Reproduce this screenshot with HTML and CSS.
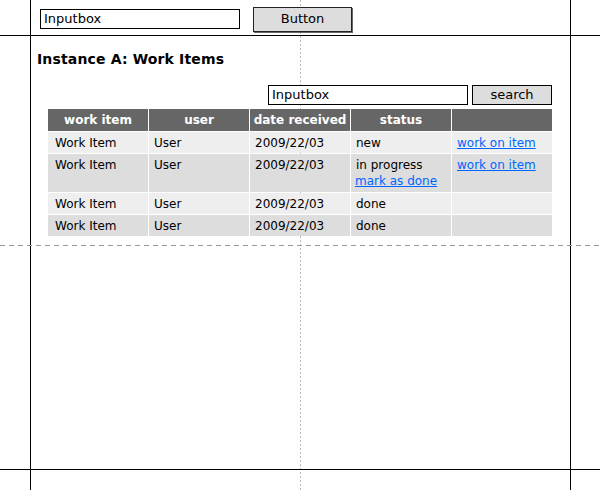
FILE: index.html
```html
<!DOCTYPE html>
<html>
<head>
<meta charset="utf-8">
<link rel="stylesheet" href="styles.css">
</head>
<body>
<div class="guide guide-v-left"></div>
<div class="guide guide-v-right"></div>
<div class="guide guide-v-center"></div>
<div class="guide guide-h-top"></div>
<div class="guide guide-h-bottom"></div>
<div class="guide guide-h-fold"></div>

<div class="topbar">
  <div class="inputbox">Inputbox</div>
  <div class="button">Button</div>
</div>

<h1 class="title">Instance A: Work Items</h1>

<div class="panel">
  <div class="searchrow">
    <div class="inputbox search-input">Inputbox</div>
    <div class="search-btn">search</div>
  </div>
  <table class="items">
    <thead>
      <tr><th>work item</th><th>user</th><th>date received</th><th>status</th><th></th></tr>
    </thead>
    <tbody>
      <tr class="odd"><td class="first">Work Item</td><td>User</td><td>2009/22/03</td><td>new</td><td><a href="#">work on item</a></td></tr>
      <tr class="even tall"><td class="first">Work Item</td><td>User</td><td>2009/22/03</td><td>in progress<br><a href="#" class="mark">mark as done</a></td><td><a href="#">work on item</a></td></tr>
      <tr class="odd"><td class="first">Work Item</td><td>User</td><td>2009/22/03</td><td>done</td><td></td></tr>
      <tr class="even"><td class="first">Work Item</td><td>User</td><td>2009/22/03</td><td>done</td><td></td></tr>
    </tbody>
  </table>
</div>
</body>
</html>
```
FILE: styles.css
```css
html {
  margin: 0;
  padding: 0;
  background: #fff;
}
body {
  margin: 0;
  padding: 0;
  position: relative;
  z-index: 0;
  width: 600px;
  height: 490px;
  overflow: hidden;
  background: #fff;
  font-family: "DejaVu Sans", Verdana, sans-serif;
  font-size: 12px;
  color: #000;
}

/* wireframe guides */
.guide {
  position: absolute;
  z-index: -1;
}
.guide-v-left, .guide-v-right {
  top: 0;
  bottom: 0;
  width: 1px;
  background: #000;
}
.guide-v-left { left: 30px; }
.guide-v-right { left: 570px; }
.guide-v-center {
  top: 0;
  bottom: 0;
  left: 300px;
  width: 1px;
  background: repeating-linear-gradient(to bottom, #bbb 0 2px, transparent 2px 4px);
}
.guide-h-top, .guide-h-bottom {
  left: 0;
  right: 0;
  height: 1px;
  background: #000;
}
.guide-h-top { top: 35px; }
.guide-h-bottom { top: 469px; }
.guide-h-fold {
  left: 0;
  right: 0;
  top: 245px;
  height: 1px;
  background: repeating-linear-gradient(to right, #999 0 5px, transparent 5px 9px);
}

/* top bar */
.topbar {
  display: flex;
  align-items: center;
  gap: 13px;
  padding: 6px 0 0 40px;
  height: 26px;
}
.inputbox {
  box-sizing: border-box;
  width: 200px;
  height: 20px;
  border: 1px solid #000;
  background: #fff;
  font-size: 13px;
  line-height: 18px;
  padding-left: 3px;
}
.button {
  box-sizing: border-box;
  width: 99px;
  height: 25px;
  border: 1px solid #222;
  box-shadow: 1px 1px 0 #666;
  background: #ddd;
  font-size: 13px;
  line-height: 22px;
  text-align: center;
}

.title {
  margin: 19px 0 0 37px;
  font-size: 14px;
  line-height: 17px;
  font-weight: bold;
  letter-spacing: 0.15px;
}

.panel {
  margin: 17px 0 0 48px;
  width: 504px;
}
.searchrow {
  display: flex;
  justify-content: flex-end;
  gap: 4px;
}
.search-input {
  width: 200px;
}
.search-btn {
  box-sizing: border-box;
  width: 80px;
  height: 20px;
  border: 1px solid #000;
  background: #ddd;
  font-size: 13px;
  line-height: 18px;
  text-align: center;
}

.items {
  table-layout: fixed;
  border-collapse: separate;
  border-spacing: 1px;
  width: 506px;
  margin: 3px -1px 0 -1px;
}
.items th, .items td {
  line-height: 16px;
  text-align: left;
  vertical-align: top;
}
.items th {
  background: #666;
  color: #fff;
  font-weight: bold;
  text-align: center;
  padding: 3px 0;
}
.items td {
  padding: 3px 4px 2px 5px;
}
.items td.first {
  padding-left: 7px;
}
.items tr.odd td { background: #eee; }
.items tr.even td { background: #ddd; }
.items tr.tall td { padding-bottom: 3px; }
.items a {
  color: #0066ff;
  text-decoration: underline;
}
.items a.mark {
  margin-left: -1px;
}
```
